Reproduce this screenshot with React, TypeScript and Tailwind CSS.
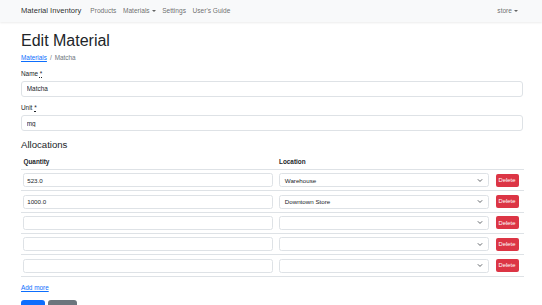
import React from "react";

const rows = [
  { qty: "523.0", loc: "Warehouse" },
  { qty: "1000.0", loc: "Downtown Store" },
  { qty: "", loc: "" },
  { qty: "", loc: "" },
  { qty: "", loc: "" },
];

function Caret() {
  return (
    <span className="ml-[2px] inline-block h-0 w-0 border-x-[2.5px] border-t-[2.5px] border-x-transparent border-t-current align-middle" />
  );
}

function Chevron() {
  return (
    <svg width="6" height="5" viewBox="0 0 16 16" className="text-[#343a40]">
      <path d="M2 5l6 6 6-6" fill="none" stroke="currentColor" strokeWidth="2.5" strokeLinecap="round" strokeLinejoin="round" />
    </svg>
  );
}

export default function App() {
  return (
    <div className="min-h-[305px] w-[542px] overflow-hidden bg-white font-['Liberation_Sans',Arial,sans-serif] text-[6.4px] text-[#212529]">
      {/* navbar */}
      <nav className="flex h-[22px] items-center justify-between bg-[#f8f9fa] pl-[21px] pr-[24px] shadow-[0_1px_2px_rgba(0,0,0,0.08)]">
        <div className="flex items-center">
          <span className="mr-[9px] text-[7.6px] text-[rgba(0,0,0,0.85)]">Material Inventory</span>
          <div className="flex items-center gap-[6.5px] text-[6.6px] text-[rgba(0,0,0,0.6)]">
            <span>Products</span>
            <span className="flex items-center">
              Materials
              <Caret />
            </span>
            <span>Settings</span>
            <span>User's Guide</span>
          </div>
        </div>
        <span className="flex items-center text-[6.6px] text-[rgba(0,0,0,0.6)]">
          store
          <Caret />
        </span>
      </nav>

      <main className="pl-[21px] pr-[19px]">
        <h1 className="mt-[9px] text-[16px] font-medium leading-[1.2]">Edit Material</h1>
        <div className="mt-[3px] flex items-center leading-[1.5] text-[#6c757d]">
          <a className="text-[#0d6efd] underline">Materials</a>
          <span className="px-[3px]">/</span>
          <span>Matcha</span>
        </div>

        <div className="mt-[6px]">
          <label className="block leading-[1.5]">
            Name <abbr className="underline decoration-dotted">*</abbr>
          </label>
          <input
            readOnly
            value="Matcha"
            className="mt-[2.4px] block h-[16px] w-full rounded-[3px] border border-[#dee2e6] px-[4.8px] text-[6.4px] outline-none"
          />
        </div>

        <div className="mt-[6.4px]">
          <label className="block leading-[1.5]">
            Unit <abbr className="underline decoration-dotted">*</abbr>
          </label>
          <input
            readOnly
            value="mg"
            className="mt-[2.4px] block h-[16px] w-full rounded-[3px] border border-[#dee2e6] px-[4.8px] text-[6.4px] outline-none"
          />
        </div>

        <h4 className="mt-[8.3px] text-[9.6px] font-medium leading-[1.2]">Allocations</h4>

        <div className="mt-[3px] w-[503px]">
          <div className="flex h-[16px] items-center border-b border-[#dee2e6] pl-[2.5px] font-bold">
            <span className="w-[255.5px]">Quantity</span>
            <span>Location</span>
          </div>
          {rows.map((r, i) => (
            <div key={i} className="flex items-center border-b border-[#dee2e6] py-[3.2px] pl-[2px]">
              <input
                readOnly
                value={r.qty}
                className="h-[14px] w-[250px] rounded-[2.5px] border border-[#dee2e6] px-[3.2px] text-[6.2px] outline-none"
              />
              <div className="ml-[6px] flex h-[14px] w-[210px] items-center justify-between rounded-[2.5px] border border-[#dee2e6] pl-[4.8px] pr-[5px] text-[6.2px]">
                <span>{r.loc}</span>
                <Chevron />
              </div>
              <button className="ml-[6.5px] h-[13px] w-[23px] rounded-[2px] bg-[#dc3545] text-[5.8px] text-white">
                Delete
              </button>
            </div>
          ))}
        </div>

        <a className="mt-[6.4px] block leading-[1.5] text-[#0d6efd] underline">Add more</a>

        <div className="mt-[7px] flex gap-[3.5px]">
          <button className="h-[16.4px] w-[23.5px] rounded-[3px] bg-[#0d6efd] text-[6.4px] text-white">Save</button>
          <button className="h-[16.4px] w-[29px] rounded-[3px] bg-[#6c757d] text-[6.4px] text-white">Cancel</button>
        </div>
      </main>
    </div>
  );
}
